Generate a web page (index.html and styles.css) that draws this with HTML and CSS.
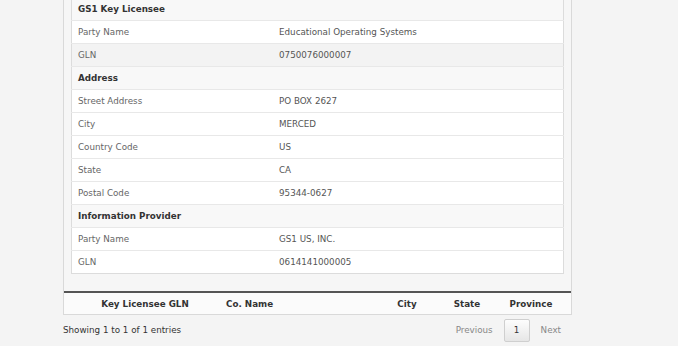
FILE: index.html
```html
<!DOCTYPE html>
<html>
<head>
<meta charset="utf-8">
<link rel="stylesheet" href="styles.css">
</head>
<body>
<div class="wrap">
  <div class="panel">
    <div class="detail">
      <table class="info">
        <tr class="sec"><th colspan="2">GS1 Key Licensee</th></tr>
        <tr><td class="lbl">Party Name</td><td>Educational Operating Systems</td></tr>
        <tr class="alt"><td class="lbl">GLN</td><td>0750076000007</td></tr>
        <tr class="sec"><th colspan="2">Address</th></tr>
        <tr><td class="lbl">Street Address</td><td>PO BOX 2627</td></tr>
        <tr><td class="lbl">City</td><td>MERCED</td></tr>
        <tr><td class="lbl">Country Code</td><td>US</td></tr>
        <tr><td class="lbl">State</td><td>CA</td></tr>
        <tr><td class="lbl">Postal Code</td><td>95344-0627</td></tr>
        <tr class="sec"><th colspan="2">Information Provider</th></tr>
        <tr><td class="lbl">Party Name</td><td>GS1 US, INC.</td></tr>
        <tr><td class="lbl">GLN</td><td>0614141000005</td></tr>
      </table>
    </div>
    <div class="results">
      <div class="col c1">Key Licensee GLN</div>
      <div class="col c2">Co. Name</div>
      <div class="col c3">City</div>
      <div class="col c4">State</div>
      <div class="col c5">Province</div>
    </div>
  </div>
  <div class="footer">
    <div class="count">Showing 1 to 1 of 1 entries</div>
    <div class="pager">
      <span class="plink">Previous</span>
      <span class="pbtn">1</span>
      <span class="plink">Next</span>
    </div>
  </div>
</div>
</body>
</html>
```
FILE: styles.css
```css
html, body {
  margin: 0;
  padding: 0;
  background: #f4f4f4;
  height: 100%;
  overflow: hidden;
}
body {
  font-family: "DejaVu Sans", Verdana, sans-serif;
  font-size: 8.75px;
  color: #555;
}
.wrap {
  margin-left: 63px;
  width: 509px;
  margin-top: -2px;
}
.panel {
  border: 1px solid #d9d9d9;
  border-top: none;
  background: #f6f6f6;
}
.detail {
  padding: 0 7px 17px 7px;
}
.info {
  width: 100%;
  border-collapse: collapse;
  border: 1px solid #dcdcdc;
  border-top: none;
  background: #fff;
}
.info td, .info th {
  height: 22px;
  padding: 0 6px;
  border-bottom: 1px solid #e8e8e8;
  text-align: left;
  vertical-align: middle;
}
.info tr:last-child td { border-bottom: none; }
.info th {
  background: #f8f8f8;
  color: #333;
  font-weight: bold;
}
.info tr.alt td { background: #f3f3f3; }
.info td.lbl { width: 189px; color: #666; }
.results {
  border-top: 2px solid #555;
  background: #fbfbfb;
  height: 21px;
  display: grid;
  grid-template-columns: 162px 150px 62px 58px 70px;
  align-items: center;
  font-weight: bold;
  color: #333;
}
.col { text-align: center; white-space: nowrap; }
.c2 { text-align: left; }
.footer {
  display: flex;
  justify-content: space-between;
  align-items: center;
  height: 30px;
  color: #333;
}
.pager {
  display: flex;
  align-items: center;
}
.plink {
  color: #888;
  padding: 0 11px;
}
.pbtn {
  display: inline-flex;
  align-items: center;
  justify-content: center;
  width: 24px;
  height: 21px;
  border: 1px solid #cfcfcf;
  border-radius: 2px;
  background: linear-gradient(#fdfdfd, #e6e6e6);
  color: #333;
}
```
